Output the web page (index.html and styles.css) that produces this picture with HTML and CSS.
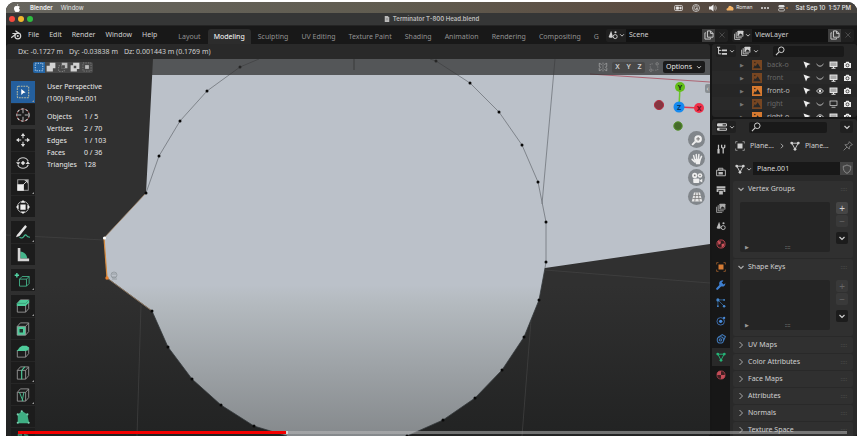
FILE: index.html
```html
<!DOCTYPE html>
<html lang="en">
<head>
<meta charset="utf-8">
<title>Terminator T-800 Head.blend</title>
<link rel="stylesheet" href="styles.css">
</head>
<body>
<svg class="defs" aria-hidden="true">
  <symbol id="chev" viewBox="0 0 8 8"><path d="M1.500 3l2.500 2.500 2.500-2.500" fill="none" stroke="currentColor" stroke-width="1.200"/></symbol>
  <symbol id="chevr" viewBox="0 0 8 8"><path d="M2.500 1l3 3-3 3" fill="none" stroke="currentColor" stroke-width="1"/></symbol>
  <symbol id="search" viewBox="0 0 16 16"><circle cx="10" cy="6" r="4.500" fill="none" stroke="currentColor" stroke-width="1.600"/><path d="M6.500 9.500L1.500 14.500" stroke="currentColor" stroke-width="1.800"/></symbol>
  <symbol id="scene" viewBox="0 0 16 16"><path d="M5 1L1 11q4 3 7 0z" fill="currentColor"/><circle cx="11.500" cy="10.500" r="3.200" fill="none" stroke="currentColor" stroke-width="1.500"/><circle cx="12" cy="3.500" r="1.700" fill="currentColor"/></symbol>
  <symbol id="layers" viewBox="0 0 16 16"><path d="M1 6v9h9M3.500 3.500v9h9" fill="none" stroke="currentColor" stroke-width="1.400"/><rect x="5.500" y="1" width="9.500" height="9.500" rx="1" fill="currentColor"/><path d="M7 9l3-4 1.500 2 1-1 1.500 3z" fill="#222"/></symbol>
  <symbol id="copy" viewBox="0 0 16 16"><path d="M5.500 1.500h5l4 4v6h-9zM10.500 1.500v4h4M3 4.500H1.500v10h9V13" fill="none" stroke="currentColor" stroke-width="1.500"/></symbol>
  <symbol id="close" viewBox="0 0 16 16"><path d="M4 4l8 8M12 4l-8 8" stroke="currentColor" stroke-width="1.200"/></symbol>
  <symbol id="tree" viewBox="0 0 16 16"><path d="M0 2h5M2.500 2v10.500H7M2.500 7H7" fill="none" stroke="currentColor" stroke-width="1.600"/><path d="M8 5.500h8v3H8zM8 11h8v3H8z" fill="currentColor"/></symbol>
  <symbol id="image" viewBox="0 0 16 16"><path fill-rule="evenodd" fill="currentColor" d="M0 0h16v16H0zM2 13h12L9 5 6 10 4.500 8z"/><circle cx="4.500" cy="4" r="1.300" fill="#3b2718"/></symbol>
  <symbol id="cursor" viewBox="0 0 16 16"><path d="M1 1l14 5-6 2.500-3 6.500z" fill="currentColor"/></symbol>
  <symbol id="eye" viewBox="0 0 16 16"><path d="M1 8q7-9 14 0-7 9-14 0z" fill="none" stroke="currentColor" stroke-width="1.700"/><circle cx="8" cy="8" r="2.500" fill="currentColor"/></symbol>
  <symbol id="closed" viewBox="0 0 16 16"><path d="M1 6q7 9 14 0" fill="none" stroke="currentColor" stroke-width="1.500"/></symbol>
  <symbol id="monitor" viewBox="0 0 16 16"><rect x="1" y="2" width="14" height="9" fill="#aaa" stroke="currentColor" stroke-width="1.800"/><path d="M4 14.500h8M8 11v3" stroke="currentColor" stroke-width="2"/></symbol>
  <symbol id="monitoroff" viewBox="0 0 16 16"><rect x="1" y="2" width="14" height="9" fill="none" stroke="currentColor" stroke-width="1.300"/><path d="M4 14.500h8" stroke="currentColor" stroke-width="1.400"/></symbol>
  <symbol id="camera" viewBox="0 0 16 16"><path fill="currentColor" d="M1 4h3l1.500-2.500h5L12 4h3v10H1z"/><circle cx="8" cy="8.700" r="3" fill="none" stroke="#222" stroke-width="1.500"/></symbol>
  <symbol id="props" viewBox="0 0 16 16"><rect x="0" y="2" width="16" height="5" rx="2" fill="currentColor"/><rect x="0" y="9" width="16" height="5" rx="2" fill="currentColor"/><path d="M9 3.500h5.500v2H9zM4 10.500h10.500v2H4z" fill="#222"/></symbol>
  <symbol id="object" viewBox="0 0 16 16"><rect x="4" y="4" width="8" height="8" fill="currentColor"/><path d="M1 4V1h3M12 1h3v3M15 12v3h-3M4 15H1v-3" fill="none" stroke="currentColor" stroke-width="1.200" opacity=".75"/></symbol>
  <symbol id="mesh" viewBox="0 0 16 16"><path d="M3 3.500h10L8 13z" fill="none" stroke="currentColor" stroke-width="1.500"/><g fill="currentColor"><circle cx="2.700" cy="3.200" r="2.200"/><circle cx="13.300" cy="3.200" r="2.200"/><circle cx="8" cy="13.200" r="2.200"/></g></symbol>
  <symbol id="pin" viewBox="0 0 16 16"><path d="M10 1l5 5-2 .5-3 3 0 3.500-7-7h3.500l3-3zM6.500 9.500L1 15" fill="none" stroke="currentColor" stroke-width="1.400"/></symbol>
  <symbol id="shield" viewBox="0 0 16 16"><path d="M8 1.500q3 2 6 2Q14.500 12 8 15 1.500 12 2 3.500q3 0 6-2z" fill="none" stroke="currentColor" stroke-width="1.300"/></symbol>
  <symbol id="box" viewBox="0 0 16 16"><path d="M1.500 5h9.500v10H1.500zM1.500 5L5 1h9.500v10L11 15M11 5l3.500-4" fill="none" stroke="currentColor" stroke-width="1"/></symbol>
</svg>

<div class="screen">
  <header class="macbar">
    <svg class="i8" viewBox="0 0 16 16"><path fill="#fff" d="M10.500 0Q8 .5 8 3.500 10.500 3.200 10.500 0zM8 4.500C5 3 2 4.500 2 9c0 3 2 7 4 7 1 0 1-.6 2-.6s1.300.6 2.300.6c1.700 0 3-2.500 3.700-4.300-2.500-1-2.500-4.500-.3-5.700C12.500 4 10 3.600 8 4.500z"/></svg>
    <b>Blender</b><span>Window</span>
    <div class="macstatus">
      <svg class="i9" viewBox="0 0 16 12" fill="none" stroke="#eee" stroke-width="1.300"><rect x="1" y="1.500" width="14" height="9" rx="2"/><path d="M4 4h4v4H4z" fill="#eee"/><path d="M9.500 6L12.500 4v4z" fill="#eee"/></svg>
      <svg class="i8" viewBox="0 0 16 16" fill="none" stroke="#ddd" stroke-width="1.500"><circle cx="8" cy="8" r="7"/><path d="M11 5a4 4 0 1 0 .5 5H8.500V8H12"/></svg>
      <svg class="i8" viewBox="0 0 16 16"><path fill="#eee" d="M0 5h4l5-4v14l-5-4H0z"/><path d="M11 5q2 3 0 6M13 3q4 5 0 10" fill="none" stroke="#ccc" stroke-width="1.300"/></svg>
      <span class="user"><svg class="i8" viewBox="0 0 16 16"><path d="M2 13q-3-4 2-5 2-7 7-3 5 1 4 6l-1 2z" fill="#f3b265"/></svg>Roman</span>
      <svg class="i8" viewBox="0 0 16 16" fill="#ddd"><circle cx="2" cy="8" r="2"/><circle cx="8" cy="8" r="2"/><circle cx="14" cy="8" r="2"/></svg>
      <svg class="i10" viewBox="0 0 20 16"><rect x="1" y="2" width="12" height="5" rx="2.500" fill="#ddd"/><rect x="1" y="9" width="12" height="5" rx="2.500" fill="none" stroke="#ddd" stroke-width="1.500"/><circle cx="18" cy="8" r="1.600" fill="#e98a29"/></svg>
      <time>Sat Sep 10&nbsp; 1:57 PM</time>
    </div>
  </header>

  <div class="titlebar">
    <div class="lights"><i class="red"></i><i class="yellow"></i><i class="green"></i></div>
    <svg class="i6" viewBox="0 0 12 16"><path d="M0 0h8l4 4v12H0z" fill="#bbb"/><path d="M3 7h6M3 10h6" stroke="#666"/></svg>
    <h1>Terminator T-800 Head.blend</h1>
  </div>

  <div class="topbar">
    <svg class="logo" viewBox="0 0 20 16" fill="none" stroke="#d5d5d5"><circle cx="13" cy="9.500" r="4.800" stroke-width="2"/><circle cx="13" cy="9.500" r="1.700" fill="#d5d5d5" stroke="none"/><path d="M2 12.500L11.500 5M4 5.500h10M9 1l7 5" stroke-width="2"/></svg>
    <nav class="menus"><button>File</button><button>Edit</button><button>Render</button><button>Window</button><button>Help</button></nav>
    <nav class="tabs"><button>Layout</button><button class="on">Modeling</button><button>Sculpting</button><button>UV Editing</button><button>Texture Paint</button><button>Shading</button><button>Animation</button><button>Rendering</button><button>Compositing</button><button>G</button></nav>
    <div class="idfield"><button class="pick" aria-label="Browse scene"><svg class="i10"><use href="#scene"/></svg><svg class="i6"><use href="#chev"/></svg></button><input aria-label="Scene" value="Scene"><button class="new" aria-label="New scene"><svg class="i10"><use href="#copy"/></svg></button><button class="del" aria-label="Remove scene"><svg class="i10"><use href="#close"/></svg></button></div>
    <div class="idfield"><button class="pick" aria-label="Browse view layer"><svg class="i10"><use href="#layers"/></svg><svg class="i6"><use href="#chev"/></svg></button><input aria-label="View layer" value="ViewLayer"><button class="new" aria-label="New view layer"><svg class="i10"><use href="#copy"/></svg></button><button class="del" aria-label="Remove view layer"><svg class="i10"><use href="#close"/></svg></button></div>
  </div>

  <div class="workspace">
    <main class="editor">
      <div class="readout"><span>Dx: -0.1727 m</span><span>Dy: -0.03838 m</span><span>Dz: 0.001443 m (0.1769 m)</span></div>
      <section class="viewport">
        <svg class="canvas" viewBox="6 59 704 377" preserveAspectRatio="xMinYMin slice">
          <defs>
            <linearGradient id="ground" x1="0" y1="59" x2="0" y2="436" gradientUnits="userSpaceOnUse"><stop offset="0" stop-color="#303030"/><stop offset=".6" stop-color="#303030"/><stop offset="1" stop-color="#222323"/></linearGradient>
            <linearGradient id="face" x1="0" y1="285" x2="0" y2="436" gradientUnits="userSpaceOnUse"><stop offset="0" stop-color="#bbc1c9"/><stop offset=".12" stop-color="#b4babf"/><stop offset="1" stop-color="#85898c"/></linearGradient>
          </defs>
          <path fill="url(#ground)" d="M6 59h704v377H6z"/>
          <path stroke="#444" stroke-width=".7" fill="none" d="M6 235l98 5M545 270l165 13M141 305l-4 131M531 320l-9 116"/>
          <path fill="url(#face)" d="M153 59H710V244L545 268 539 300 524 337 502 370 475 398 443 420 407 436H287L254 426 221 405 192 379 168 347 152 311 107 278 104 238 146 193z"/>
          <path fill="none" stroke="#70757b" stroke-width=".8" d="M146 193l13-37 21-35 27-30 33-24 19-8M430 59l6 2 34 22 29 29 23 33 16 37 8 40v40l-1 6M555 59l-13 145"/>
          <path fill="none" stroke="#353a3c" stroke-width=".8" d="M354 59v11M545 268l-6 32-15 37-22 33-27 28-32 22-36 16M287 436l-33-10-33-21-29-26-24-32-16-36-45-33"/>
          <path fill="none" stroke="#a94d5c" stroke-width=".8" d="M590 74l120 8"/>
          <path fill="none" stroke="#d78a3c" stroke-width="1.200" d="M104 238l3 40"/>
          <path fill="none" stroke="#a78765" stroke-width=".7" d="M146 193l-42 45M107 278l45 33"/>
          <path stroke="#080808" stroke-width="3" stroke-linecap="round" d="M146 193h0M159 156h0M180 121h0M207 91h0M240 67h0M436 61h0M470 83h0M499 112h0M522 145h0M538 182h0M546 222h0M546 262h0M539 300h0M524 337h0M502 370h0M475 398h0M443 420h0M407 436h0M254 426h0M221 405h0M192 379h0M168 347h0M152 311h0"/>
          <circle cx="104.500" cy="238" r="1.600" fill="#fff"/><circle cx="107" cy="278" r="1.700" fill="#ed812b"/>
          <g fill="none" stroke="#8e969b" stroke-width=".8"><circle cx="114" cy="275" r="3"/><path d="M112 274h4M112 277h4M112 279h5"/></g>
        </svg>

        <div class="viewhead">
          <div class="modes">
            <button class="on" aria-label="Set selection"><svg class="i10" viewBox="0 0 16 16"><rect x="2" y="2" width="12" height="12" fill="none" stroke="#c6dcf0" stroke-width="1.500" stroke-dasharray="2 2"/></svg></button>
            <button aria-label="Extend selection"><svg class="i10" viewBox="0 0 16 16"><path d="M6 1h9v9h-4v5H1V6h5z" fill="#d2d2d2"/></svg></button>
            <button aria-label="Subtract selection"><svg class="i10" viewBox="0 0 16 16"><path d="M1 6h5v4h4v5H1z" fill="none" stroke="#aaa" stroke-dasharray="2 2"/><path d="M6 1h9v9h-4V5H6z" fill="#bbb"/></svg></button>
            <button aria-label="Difference selection"><svg class="i10" viewBox="0 0 16 16"><path fill-rule="evenodd" d="M5 1h10v10h-4v4H1V5h4zM6 6v4h4V6z" fill="#d2d2d2"/></svg></button>
            <button aria-label="Intersect selection"><svg class="i10" viewBox="0 0 16 16"><rect x="1.500" y="1.500" width="13" height="13" fill="none" stroke="#999" stroke-dasharray="2 2"/><rect x="5" y="5" width="6" height="6" fill="#bbb"/></svg></button>
          </div>
          <div class="viewopts">
            <svg class="i10" viewBox="0 0 16 16" fill="none" stroke="#b5b5b5"><path d="M8 1v14" stroke-dasharray="2 1"/><path d="M6 4L2 2v5l2 1-2 2v4l4-2M10 4l4-2v5l-2 1 2 2v4l-4-2"/></svg>
            <div class="axes"><button>X</button><button>Y</button><button>Z</button></div>
            <svg class="i10 dim" viewBox="0 0 16 16" fill="none" stroke="#999"><circle cx="3" cy="13" r="2"/><circle cx="13" cy="3" r="2"/><path d="M2 9V3h6M14 7v6H7" stroke-dasharray="2 2"/></svg>
            <button class="options">Options<svg class="i6"><use href="#chev"/></svg></button>
          </div>
        </div>

        <div class="viewbody">
          <div class="tools">
            <div>
              <button class="on sub" aria-label="Select box"><svg viewBox="0 0 16 16"><rect x="1.500" y="1.500" width="13" height="13" rx="1" fill="none" stroke="#b9bb9e" stroke-width="1.200" stroke-dasharray="2 1"/><path d="M6 4.500l5 4-2.500.5L6 11.500z" fill="#fff"/></svg></button>
              <button aria-label="Cursor"><svg viewBox="0 0 16 16"><circle cx="8" cy="8" r="7" fill="none" stroke="#ddd" stroke-width="1.200" stroke-dasharray="3 2"/><circle cx="8" cy="8" r="7" fill="none" stroke="#a44" stroke-dasharray="2 3" stroke-dashoffset="-3"/><path d="M8 2v4M8 10v4M2 8h4M10 8h4" stroke="#ccc"/></svg></button>
            </div>
            <div>
              <button aria-label="Move"><svg viewBox="0 0 16 16"><path d="M8 0l2.500 3.500h-5zM8 16l2.500-3.500h-5zM0 8l3.500-2.500v5zM16 8l-3.500-2.500v5z" fill="#ddd"/><path d="M8 3v3M8 10v3M3 8h3M10 8h3" stroke="#ddd" stroke-width="1.200"/></svg></button>
              <button aria-label="Rotate"><svg viewBox="0 0 16 16"><path d="M2 6a6.500 6.500 0 0 1 12 0M14 10a6.500 6.500 0 0 1-12 0" fill="none" stroke="#ccc" stroke-width="1.200"/><path d="M8 5.500L10.500 8 8 10.500 5.500 8zM0 7h5l-2.500 3zM11 9h5l-2.500-3z" fill="#ddd"/></svg></button>
              <button class="sub" aria-label="Scale"><svg viewBox="0 0 16 16"><rect x="2" y="2" width="12" height="12" fill="none" stroke="#aaa"/><path d="M1.500 7h7.500v7.500H1.500z" fill="#eee"/><path d="M8 8l5-5M10 3h3v3" fill="none" stroke="#ddd"/></svg></button>
              <button aria-label="Transform"><svg viewBox="0 0 16 16"><circle cx="8" cy="8" r="6.500" fill="none" stroke="#bbb"/><path d="M5 5h6v6H5zM8 0l2.500 3h-5zM8 16l2.500-3h-5zM0 8l3-2.500v5zM16 8l-3-2.500v5z" fill="#eee"/></svg></button>
            </div>
            <div>
              <button class="sub" aria-label="Annotate"><svg viewBox="0 0 16 16"><path d="M1 11.500L10.500 0l2 2L4 12.500 0 14z" fill="#e5e5e5"/><path d="M4 14q3 2 5-1t3-1 4 2" fill="none" stroke="#43b890" stroke-width="1.300"/></svg></button>
              <button aria-label="Measure"><svg viewBox="0 0 16 16"><path d="M5 12V4q7 1 8 8z" fill="#45b58b"/><path d="M2 0h3v12h10v3H2z" fill="#d5d5d5"/></svg></button>
            </div>
            <div>
              <button class="sub" aria-label="Add cube"><svg viewBox="0 0 16 16"><path d="M4 7h8v8H4zM4 7l3-3h8v8l-3 3M12 7l3-3" fill="none" stroke="#45b58b"/><path d="M1 0v5M-1.500 2.500h5" stroke="#53d6a5" stroke-width="1.600"/></svg></button>
            </div>
            <div>
              <button class="sub" aria-label="Extrude"><svg viewBox="0 0 16 16" color="#999"><use href="#box"/><path d="M1 5l4-4h10v3l-4 4H1z" fill="#4ecb9a"/><path d="M1 5h10l4-4" fill="none" stroke="#318366" stroke-width=".7"/></svg></button>
              <button aria-label="Inset"><svg viewBox="0 0 16 16" color="#999"><path d="M1 5h10v10H1z" fill="#4ecb9a"/><path d="M4 8h4v4H4z" fill="#20352d"/><use href="#box"/></svg></button>
              <button aria-label="Bevel"><svg viewBox="0 0 16 16" color="#999"><path d="M1.500 7v8H11l3.500-4V4M11 8v7" fill="none" stroke="currentColor"/><path d="M1 8l3-4 3-2h5l3 2-1 3-3 1z" fill="#4ecb9a"/></svg></button>
              <button class="sub" aria-label="Loop cut"><svg viewBox="0 0 16 16" color="#999"><use href="#box"/><path d="M6.500 15V5L10 1" fill="none" stroke="#4ecb9a" stroke-width="1.300"/></svg></button>
              <button class="sub" aria-label="Knife"><svg viewBox="0 0 16 16" color="#999"><use href="#box"/><path d="M4 5l4 10M9 5l-2 10" fill="none" stroke="#4ecb9a"/></svg></button>
              <button aria-label="Poly build"><svg viewBox="0 0 16 16"><path d="M2 15V5l5-4 6 4 2 10z" fill="#3fae83"/><g fill="#78cfae"><circle cx="2" cy="5" r="1.200"/><circle cx="6.500" cy="1.500" r="1.200"/><circle cx="13" cy="5" r="1.200"/><circle cx="2" cy="14.500" r="1.200"/><circle cx="14.500" cy="14.500" r="1.200"/></g></svg></button>
              <button aria-label="Spin"><svg viewBox="0 0 16 16"><path d="M3 8V3h3v12M9 3l4 1v9" fill="none" stroke="#3a7f66" stroke-width="2"/></svg></button>
            </div>
          </div>

          <div class="stats">
            <p>User Perspective</p><p>(100) Plane.001</p>
            <dl><dt>Objects</dt><dd>1 / 5</dd><dt>Vertices</dt><dd>2 / 70</dd><dt>Edges</dt><dd>1 / 103</dd><dt>Faces</dt><dd>0 / 36</dd><dt>Triangles</dt><dd>128</dd></dl>
          </div>

          <div class="navigate">
            <svg class="gizmo" viewBox="0 5 52 54"><path d="M27 11l-1 20" stroke="#6cc52c" stroke-width="1.500"/><path d="M26 31l20 1" stroke="#e4354d" stroke-width="1.500"/><circle cx="6" cy="29" r="4.600" fill="#863640" stroke="#b53043"/><circle cx="25" cy="50" r="4.200" fill="#466a2b" stroke="#539328"/><circle cx="27" cy="11" r="5" fill="#62bd17"/><circle cx="26" cy="31" r="5.500" fill="#168af0"/><circle cx="46" cy="32" r="5" fill="#ef3048"/><g font-size="7" font-weight="700" text-anchor="middle" fill="#132018"><text x="27" y="14">Y</text><text x="26" y="34" fill="#0c3764">Z</text><text x="46" y="35" fill="#681020">X</text></g></svg>
            <button aria-label="Zoom"><svg viewBox="0 0 16 16"><circle cx="9.500" cy="6.500" r="5" fill="#eee"/><path d="M6 10l-4.500 4.500" stroke="#eee" stroke-width="2.500"/><path d="M7 6.500h5M9.500 4v5" stroke="#777" stroke-width="1.300"/></svg></button>
            <button aria-label="Pan"><svg viewBox="0 0 16 16" fill="none" stroke="#eee" stroke-width="2" stroke-linecap="round"><path d="M5 9L3.500 3.500M7.500 8L7 2M10 8l.5-6M12 9l2-4.500M5 12L1.500 8.500"/><path d="M5.500 9h6.500l-1 5H7.500z" fill="#eee"/></svg></button>
            <button aria-label="Camera view"><svg viewBox="0 0 16 16" fill="#eee"><circle cx="5" cy="4.500" r="3.500"/><circle cx="12" cy="4.500" r="3"/><rect x="3" y="8.500" width="8" height="6" rx="1"/><path d="M11 11.500l4-2.500v5z"/><g fill="#777"><circle cx="5" cy="4.500" r="1.200"/><circle cx="12" cy="4.500" r="1"/></g></svg></button>
            <button aria-label="Perspective"><svg viewBox="0 0 16 16"><path d="M4 2h8l3 12H1z" fill="#e5e5e5"/><path d="M3 6h10M2 10h12M6.500 2L5 14M9.500 2L11 14" stroke="#777"/></svg></button>
          </div>
          <button class="drawer" aria-label="Show side panel">‹</button>
        </div>
      </section>
    </main>

    <aside class="side">
      <section class="outliner">
        <div class="edhead">
          <button aria-label="Editor type"><svg class="i10"><use href="#tree"/></svg><svg class="i6"><use href="#chev"/></svg></button>
          <button aria-label="Display mode"><svg class="i10"><use href="#layers"/></svg><svg class="i6"><use href="#chev"/></svg></button>
          <label class="find"><svg class="i10"><use href="#search"/></svg><input aria-label="Filter objects"></label>
        </div>
        <ul>
          <li class="off"><span class="tri">▶</span><svg class="i10 img"><use href="#image"/></svg><span class="nm">back-o</span><svg class="i8"><use href="#cursor"/></svg><svg class="i8"><use href="#closed"/></svg><svg class="i9"><use href="#monitor"/></svg><svg class="i9"><use href="#camera"/></svg></li>
          <li class="off"><span class="tri">▶</span><svg class="i10 img"><use href="#image"/></svg><span class="nm">front</span><svg class="i8"><use href="#cursor"/></svg><svg class="i8"><use href="#closed"/></svg><svg class="i9"><use href="#monitor"/></svg><svg class="i9"><use href="#camera"/></svg></li>
          <li><span class="tri">▶</span><svg class="i10 img"><use href="#image"/></svg><span class="nm">front-o</span><svg class="i8"><use href="#cursor"/></svg><svg class="i8"><use href="#eye"/></svg><svg class="i9"><use href="#monitor"/></svg><svg class="i9"><use href="#camera"/></svg></li>
          <li class="off"><span class="tri">▶</span><svg class="i10 img"><use href="#image"/></svg><span class="nm">right</span><svg class="i8"><use href="#cursor"/></svg><svg class="i8"><use href="#closed"/></svg><svg class="i9"><use href="#monitoroff"/></svg><svg class="i9"><use href="#camera"/></svg></li>
          <li><span class="tri">▶</span><svg class="i10 img"><use href="#image"/></svg><span class="nm">right-o</span><svg class="i8"><use href="#cursor"/></svg><svg class="i8"><use href="#eye"/></svg><svg class="i9"><use href="#monitor"/></svg><svg class="i9"><use href="#camera"/></svg></li>
        </ul>
      </section>

      <section class="properties">
        <div class="edhead">
          <button aria-label="Editor type"><svg class="i10"><use href="#props"/></svg><svg class="i6"><use href="#chev"/></svg></button>
          <label class="find"><svg class="i10"><use href="#search"/></svg><input aria-label="Search properties"></label>
          <button class="last" aria-label="Options"><svg class="i8"><use href="#chev"/></svg></button>
        </div>
        <div class="propbody">
          <nav class="ptabs">
            <button aria-label="Tool"><svg class="i10" viewBox="0 0 16 16" fill="none" stroke="#c5c5c5" stroke-width="2"><path d="M4 1v7"/><path d="M4 8v7" stroke-width="3.500"/><path d="M9 1v4l2.500 2L14 5V1M11.500 7v8"/></svg></button>
            <button class="gap" aria-label="Render"><svg class="i10" viewBox="0 0 16 16"><path d="M1 5h14v9H1zM4 2h7v3H4z" fill="none" stroke="#bbb" stroke-width="1.500"/><path d="M4 8h7v4H4z" fill="#bbb"/></svg></button>
            <button aria-label="Output"><svg class="i10" viewBox="0 0 16 16"><path d="M1 2h14v3H1zM1 6h14v5h-3V8H4v3H1zM5 9h6v6H5z" fill="#bbb"/></svg></button>
            <button aria-label="View layer"><svg class="i10" color="#aaa"><use href="#layers"/></svg></button>
            <button aria-label="Scene"><svg class="i10" color="#bbb"><use href="#scene"/></svg></button>
            <button aria-label="World"><svg class="i10" viewBox="0 0 16 16"><circle cx="8" cy="8" r="6.500" fill="#321c1e" stroke="#be4751" stroke-width="1.500"/><path d="M3 3l5 1-1 4-3 1zM9 8l4-1v4l-4 3z" fill="#cf525c"/></svg></button>
            <button class="gap" aria-label="Object"><svg class="i10" color="#d77c35"><use href="#object"/></svg></button>
            <button aria-label="Modifiers"><svg class="i10" viewBox="0 0 16 16"><path d="M2 14l7-7" stroke="#3e7fd0" stroke-width="3.500" stroke-linecap="round"/><path d="M12 1a5 5 0 1 0 3 4l-3 2-3-3z" fill="#3e7fd0"/></svg></button>
            <button aria-label="Particles"><svg class="i10" viewBox="0 0 16 16"><path d="M3 3l10 10M3 3h10M3 3v10" stroke="#356599" stroke-width="1.300"/><g fill="#4687cc"><circle cx="3" cy="3" r="2.500"/><circle cx="13" cy="3" r="1.500"/><circle cx="13" cy="13" r="2"/><circle cx="3" cy="13" r="1.500"/></g></svg></button>
            <button aria-label="Physics"><svg class="i10" viewBox="0 0 16 16"><circle cx="7.500" cy="8.500" r="6" fill="none" stroke="#3e70b2" stroke-width="1.500"/><circle cx="7.500" cy="8.500" r="2.700" fill="#4b8ee0"/><circle cx="13" cy="3" r="1.800" fill="#4b8ee0"/></svg></button>
            <button aria-label="Constraints"><svg class="i10" viewBox="0 0 16 16" fill="none" stroke="#4179b9" stroke-width="1.700"><path d="M4 5l6-4 5 3-3 7"/><circle cx="7" cy="9.500" r="5"/><circle cx="7" cy="9.500" r="1.800"/></svg></button>
            <button class="on" aria-label="Object data"><svg class="i10" color="#25b477"><use href="#mesh"/></svg></button>
            <button aria-label="Material"><svg class="i10" viewBox="0 0 16 16"><circle cx="8" cy="8" r="6.500" fill="#411f22" stroke="#ae4650" stroke-width="1.200"/><path d="M8 8V1.500A6.500 6.500 0 0 0 1.500 8zM8 8h6.500A6.500 6.500 0 0 1 8 14.500z" fill="#c44d58"/></svg></button>
          </nav>
          <div class="panels">
            <div class="crumbs"><svg class="i10"><use href="#object"/></svg><span>Plane...</span><svg class="i6"><use href="#chevr"/></svg><svg class="i10"><use href="#mesh"/></svg><span>Plane...</span><button aria-label="Pin"><svg class="i10"><use href="#pin"/></svg></button></div>
            <div class="datablock"><button class="pick" aria-label="Browse mesh"><svg class="i10"><use href="#mesh"/></svg><svg class="i6"><use href="#chev"/></svg></button><input aria-label="Mesh name" value="Plane.001"><button class="fake" aria-label="Fake user"><svg class="i10"><use href="#shield"/></svg></button></div>
            <section class="panel"><h2><svg class="i8"><use href="#chev"/></svg>Vertex Groups<i>::::</i></h2><div class="content"><div class="list"><span>▶</span><span>::::</span></div><div class="ops"><button>+</button><button class="no">−</button><button class="more" aria-label="Specials"><svg class="i8"><use href="#chev"/></svg></button></div></div></section>
            <section class="panel"><h2><svg class="i8"><use href="#chev"/></svg>Shape Keys<i>::::</i></h2><div class="content"><div class="list"><span>▶</span><span>::::</span></div><div class="ops"><button class="no">+</button><button class="no">−</button><button class="more" aria-label="Specials"><svg class="i8"><use href="#chev"/></svg></button></div></div></section>
            <section class="panel"><h2><svg class="i8"><use href="#chevr"/></svg>UV Maps<i>::::</i></h2></section>
            <section class="panel"><h2><svg class="i8"><use href="#chevr"/></svg>Color Attributes<i>::::</i></h2></section>
            <section class="panel"><h2><svg class="i8"><use href="#chevr"/></svg>Face Maps<i>::::</i></h2></section>
            <section class="panel"><h2><svg class="i8"><use href="#chevr"/></svg>Attributes<i>::::</i></h2></section>
            <section class="panel"><h2><svg class="i8"><use href="#chevr"/></svg>Normals<i>::::</i></h2></section>
            <section class="panel"><h2><svg class="i8"><use href="#chevr"/></svg>Texture Space<i>::::</i></h2></section>
          </div>
        </div>
      </section>
    </aside>
  </div>
  <progress class="seek" aria-label="Video progress" value="326" max="1000"></progress>
</div>
</body>
</html>
```
FILE: styles.css
```css
* { box-sizing: border-box; }
body { margin: 0; background: #fff; font: 7px/12px "Noto Sans", "DejaVu Sans", sans-serif; color: #d0d0d0; overflow: hidden; }
button, input { font: inherit; color: inherit; background: none; border: 0; padding: 0; margin: 0; min-width: 0; }
button { display: flex; align-items: center; justify-content: center; }
input { outline: 0; }
svg { display: block; flex: none; }
h1, h2, p, ul, dl, dd { margin: 0; padding: 0; font-size: inherit; font-weight: 400; }
.defs { position: absolute; width: 0; height: 0; }
.i6 { width: 6px; height: 6px; }
.i8 { width: 8px; height: 8px; }
.i9 { width: 9px; height: 8px; }
.i10 { width: 10px; height: 10px; }

.screen { position: relative; margin: 2px 0 0 6px; height: calc(100vh - 2px); display: flex; flex-direction: column; border-radius: 9px 9px 0 0; overflow: hidden; background: #161616; }
.macbar { flex: none; height: 11px; display: flex; align-items: center; gap: 9px; padding: 0 6px 0 7px; background: linear-gradient(90deg, #67655e, #605c50 45%, #5b4c41 75%, #45423f); font: 6px/11px Inter, sans-serif; color: #e8e8e8; }
.macbar b { margin-right: -1px; }
.macstatus { margin-left: auto; display: flex; align-items: center; gap: 9px; }
.macstatus time { font-weight: 500; margin-left: -2px; }
.user { display: flex; align-items: center; gap: 2px; font-size: 5px; }
.titlebar { flex: none; position: relative; height: 13px; display: flex; align-items: center; justify-content: center; gap: 3px; background: #353636; border-bottom: 1px solid #242424; font: 600 6px/12px Inter, sans-serif; color: #bdbdbd; }
.titlebar h1 { font-weight: 600; }
.lights { position: absolute; left: 3px; top: 3px; display: flex; gap: 3px; }
.lights i { width: 6px; height: 6px; border-radius: 50%; }
.red { background: #f4493e; }
.yellow { background: #f2b62e; }
.green { background: #2fbd40; }

.topbar { flex: none; height: 18px; display: flex; align-items: center; gap: 4px; padding: 0 3px 0 4px; background: #181818; }
.logo { width: 12px; height: 10px; }
.menus { display: flex; gap: 10px; padding-left: 2px; }
.tabs { flex: 1; min-width: 0; overflow: hidden; align-self: stretch; display: flex; align-items: flex-end; justify-content: space-between; padding-left: 11px; margin-right: -3px; color: #929292; }
.tabs button { height: 15px; padding: 0 6px; border-radius: 3px 3px 0 0; white-space: nowrap; }
.tabs .on { background: #2c2c2c; color: #fff; }
.idfield { display: flex; height: 13px; width: 122px; background: #202020; border-radius: 2px; }
.pick { width: 20px; gap: 1px; flex: none; }
.idfield input { flex: 1; width: 0; padding: 0 3px; background: #121212; }
.new { width: 13px; background: #3d3d3d; }
.del { width: 13px; color: #555; }

.workspace { flex: 1; min-height: 0; display: flex; gap: 2px; }
.editor { flex: 1; min-width: 0; display: flex; flex-direction: column; border-radius: 3px; overflow: hidden; }
.readout { flex: none; height: 15px; display: flex; align-items: center; gap: 6px; padding-left: 12px; background: #292929; }
.viewport { flex: 1; min-height: 0; position: relative; display: flex; flex-direction: column; overflow: hidden; background: #2b2b2b; }
.canvas { position: absolute; inset: 0; width: 100%; height: 100%; }
.viewhead { flex: none; position: relative; height: 16px; display: flex; align-items: center; justify-content: space-between; padding: 0 5px 0 27px; background: rgba(48, 48, 48, .74); }
.modes { display: flex; background: #484848; border-radius: 2px; overflow: hidden; }
.modes button { width: 12px; height: 11px; }
.modes .on { background: #2465a5; }
.viewopts { display: flex; align-items: center; gap: 4px; }
.axes { display: flex; background: #484848; border-radius: 2px; font-weight: 600; }
.axes button { width: 11px; height: 11px; }
.options { width: 42px; height: 12px; gap: 4px; background: #1b1b1b; border-radius: 2px; color: #e5e5e5; }
.viewbody { position: relative; flex: 1; min-height: 0; display: flex; align-items: flex-start; padding: 6px 0 0 5px; }
.tools { display: flex; flex-direction: column; gap: 4px; }
.tools button { position: relative; width: 24px; height: 22px; background: #1c1c1c; }
.tools button + button { border-top: 1px solid #262626; }
.tools svg { width: 14px; height: 14px; overflow: visible; }
.tools .on { background: #245f9d; }
.sub::after { content: ""; position: absolute; right: 1px; bottom: 1px; border: 1px solid #999; border-top-color: transparent; border-left-color: transparent; }
.stats { padding-left: 12px; color: #e8e8e8; }
.stats dl { display: grid; grid-template-columns: 37px auto; margin-top: 6px; }
.navigate { margin-left: auto; display: flex; flex-direction: column; align-items: flex-end; gap: 2px; padding-right: 5px; }
.gizmo { width: 52px; height: 54px; margin-bottom: -6px; }
.navigate button { width: 17px; height: 17px; border-radius: 50%; background: #81868b; }
.navigate button svg { width: 12px; height: 12px; }
.drawer { position: absolute; right: 0; top: 9px; width: 5px; height: 9px; background: #898e92; color: #ddd; border-radius: 2px 0 0 2px; }

.side { flex: 0 0 145px; display: flex; flex-direction: column; gap: 2px; }
.edhead { flex: none; display: flex; align-items: center; gap: 4px; padding: 0 4px; height: 14px; }
.edhead button { width: 20px; height: 12px; gap: 2px; background: #202020; border-radius: 2px; }
.edhead .last { width: 13px; }
.find { flex: 1; display: flex; align-items: center; height: 11px; margin: 0 9px; padding-left: 2px; background: #191919; border-radius: 2px; }
.find input { flex: 1; width: 0; }
.outliner { flex: none; height: 73px; overflow: hidden; background: #262626; border-radius: 3px; }
.outliner ul { list-style: none; }
.outliner li { display: flex; align-items: center; gap: 5px; height: 13px; padding: 0 5px 0 28px; color: #eee; }
.outliner li:nth-child(even) { background: #292929; }
.tri { width: 7px; font-size: 5px; color: #777; }
.img { color: #d77a30; }
.nm { flex: 1; white-space: nowrap; color: #bbb; }
.off .nm { color: #686868; }
.off .img { color: #774622; }
.properties { flex: 1; min-height: 0; display: flex; flex-direction: column; background: #292929; border-radius: 3px; overflow: hidden; }
.properties .edhead { height: 16px; }
.propbody { flex: 1; min-height: 0; display: flex; }
.ptabs { flex: none; width: 18px; background: #171717; padding-top: 5px; }
.ptabs button { width: 18px; height: 18px; }
.ptabs .gap { margin-top: 5px; }
.ptabs .on { background: #292929; }
.panels { flex: 1; min-width: 0; padding: 2px 4px 0 3px; }
.crumbs { display: flex; align-items: center; gap: 5px; height: 18px; padding-left: 2px; }
.crumbs button { margin-left: auto; color: #888; }
.datablock { display: flex; height: 13px; margin: 7px 0 6px; }
.datablock input { flex: 1; width: 0; padding: 0 4px; background: #181818; color: #ddd; }
.fake { width: 13px; background: #444; color: #999; }
.panel { margin-bottom: 1px; background: #303030; border-radius: 2px; }
.panel h2 { display: flex; align-items: center; gap: 3px; height: 16px; padding: 0 6px 0 4px; }
.panel h2 svg { color: #aaa; }
.panel h2 i { margin-left: auto; color: #555; font-style: normal; font-size: 6px; }
.content { display: flex; justify-content: space-between; gap: 6px; padding: 5px 5px 6px 7px; }
.list { flex: 1; height: 50px; display: grid; grid-template-columns: 1fr 1fr; align-items: end; padding: 0 5px; background: #252525; border-radius: 2px; color: #999; font-size: 5px; line-height: 10px; }
.ops { display: flex; flex-direction: column; gap: 1px; }
.ops button { width: 12px; height: 12px; background: #454545; border-radius: 2px; font-size: 10px; }
.ops .no { background: #393939; color: #666; }
.ops .more { margin-top: 4px; background: #1c1c1c; }

.seek { position: absolute; left: 12px; right: 10px; bottom: 2px; width: calc(100% - 22px); height: 3px; appearance: none; border: 0; background: rgba(190, 190, 190, .3); }
.seek::-webkit-progress-bar { background: rgba(190, 190, 190, .3); }
.seek::-webkit-progress-value { background: #f40000; border-right: 2px solid #d6d6d6; }
```
